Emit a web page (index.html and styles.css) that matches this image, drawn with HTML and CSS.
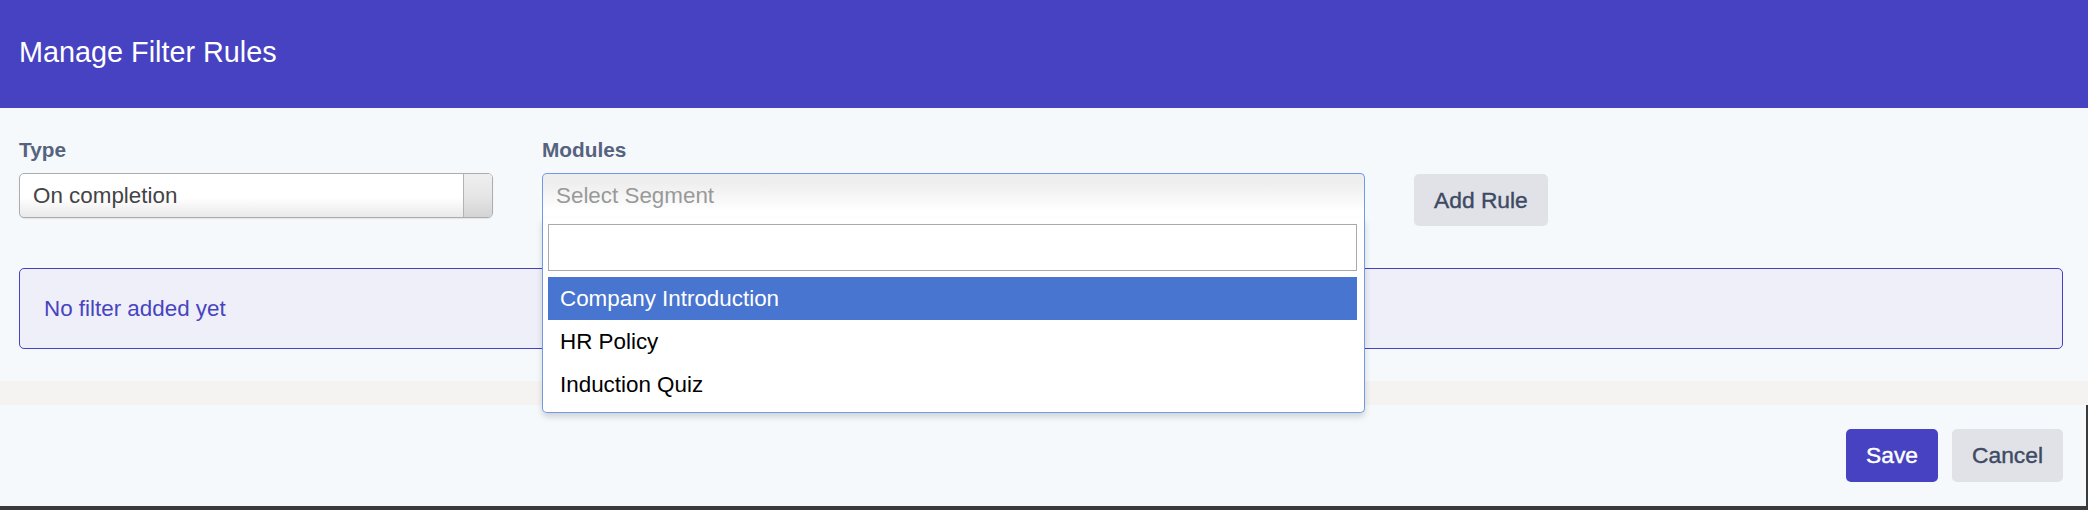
FILE: index.html
```html
<!DOCTYPE html>
<html>
<head>
<meta charset="utf-8">
<title>Manage Filter Rules</title>
<link rel="stylesheet" href="styles.css">
</head>
<body>
<div class="modal">
  <div class="modal-header">
    <h4 class="modal-title">Manage Filter Rules</h4>
  </div>
  <div class="modal-body">
    <div class="form-grid">
      <label class="field-label">Type</label>
      <label class="field-label">Modules</label>
      <span></span>
      <div class="chosen">
        <div class="chosen-single">
          <span class="chosen-value">On completion</span>
          <div class="chosen-arrow"></div>
        </div>
      </div>
      <div class="chosen chosen-open">
        <div class="chosen-single">
          <span class="chosen-placeholder">Select Segment</span>
        </div>
        <div class="chosen-drop">
          <div class="chosen-search"><input type="text"></div>
          <ul class="chosen-results">
            <li class="result highlighted">Company Introduction</li>
            <li class="result">HR Policy</li>
            <li class="result">Induction Quiz</li>
          </ul>
        </div>
      </div>
      <button class="btn btn-light">Add Rule</button>
    </div>
    <div class="info-box">No filter added yet</div>
  </div>
  <div class="band"></div>
  <div class="modal-footer">
    <button class="btn btn-primary">Save</button>
    <button class="btn btn-light">Cancel</button>
  </div>
</div>
</body>
</html>
```

FILE: styles.css
```css
html, body {
  margin: 0;
  padding: 0;
}
body {
  background: #3a3a3a;
  font-family: "Liberation Sans", Arial, Helvetica, sans-serif;
  height: 510px;
  overflow: hidden;
}
.modal {
  width: 2088px;
  height: 506px;
  display: flex;
  flex-direction: column;
  background: transparent;
}
.modal-header {
  box-sizing: border-box;
  height: 108px;
  padding: 36px 19px 0 19px;
  background: #4642c1;
}
.modal-title {
  margin: 0;
  font-size: 28.8px;
  line-height: 33px;
  font-weight: normal;
  color: #ffffff;
}
.modal-body {
  background: #f5f9fc;
  padding: 30px 25px 32px 19px;
}
.form-grid {
  display: grid;
  grid-template-columns: 474px 823px auto;
  column-gap: 49px;
  align-items: start;
  justify-content: start;
  margin-bottom: 42px;
}
.field-label {
  display: block;
  font-size: 20.8px;
  line-height: 24px;
  font-weight: bold;
  color: #56637e;
  margin-bottom: 11px;
}
.chosen {
  position: relative;
  height: 45px;
  font-size: 22.4px;
}
.chosen-single {
  box-sizing: border-box;
  height: 45px;
  display: flex;
  border: 1px solid #adadad;
  border-radius: 5px;
  background: linear-gradient(#ffffff 55%, #e9e9e9 100%);
  box-shadow: 0 1px 1px rgba(0, 0, 0, 0.08);
  overflow: hidden;
}
.chosen-value {
  flex: 1;
  padding-left: 13px;
  line-height: 43px;
  color: #444444;
}
.chosen-arrow {
  width: 28px;
  border-left: 1px solid #b3b3b3;
  background: linear-gradient(#efefef 0%, #e6e6e6 50%, #d4d4d4 100%);
}
.chosen-open .chosen-single {
  border: 1px solid #7099e6;
  border-bottom: 0;
  border-radius: 5px 5px 0 0;
  background: linear-gradient(#eeeeee 20%, #ffffff 85%);
  box-shadow: none;
}
.chosen-placeholder {
  padding-left: 13px;
  line-height: 44px;
  color: #999999;
}
.chosen-drop {
  position: absolute;
  top: 45px;
  left: 0;
  width: 100%;
  box-sizing: border-box;
  background: #ffffff;
  border: 1px solid #7099e6;
  border-top: 0;
  border-radius: 0 0 5px 5px;
  box-shadow: 0 4px 6px rgba(0, 0, 0, 0.15);
  padding: 6px 7px 6px 5px;
  z-index: 10;
}
.chosen-search input {
  display: block;
  box-sizing: border-box;
  width: 100%;
  height: 47px;
  margin: 0;
  border: 1px solid #aaaaaa;
  background: #ffffff;
  outline: none;
}
.chosen-results {
  list-style: none;
  margin: 6px 0 0 0;
  padding: 0;
}
.result {
  height: 43px;
  line-height: 43px;
  padding-left: 12px;
  color: #000000;
}
.result.highlighted {
  background: #4875d0;
  color: #ffffff;
}
.btn {
  box-sizing: border-box;
  height: 52px;
  padding: 0 20px;
  border: 0;
  border-radius: 5px;
  font-family: "Liberation Sans", Arial, Helvetica, sans-serif;
  font-size: 22.8px;
  -webkit-text-stroke: 0.4px currentColor;
  cursor: pointer;
}
.form-grid .btn {
  margin-top: 1px;
}
.btn-light {
  background: #e1e2e7;
  color: #3e4a64;
}
.btn-primary {
  background: #4642c1;
  color: #ffffff;
}
.info-box {
  box-sizing: border-box;
  height: 81px;
  border: 1px solid #4642c1;
  border-radius: 5px;
  background: #efeff9;
  color: #4744c0;
  font-size: 22.4px;
  line-height: 79px;
  padding-left: 24px;
}
.band {
  height: 24px;
  background: #f4f3f2;
}
.modal-footer {
  flex: 1;
  display: flex;
  justify-content: flex-end;
  align-items: flex-start;
  gap: 14px;
  padding: 24px 23px 0 0;
  margin-right: 2px;
  background: #f5f9fc;
}
.modal-footer .btn {
  height: 53px;
}
```
